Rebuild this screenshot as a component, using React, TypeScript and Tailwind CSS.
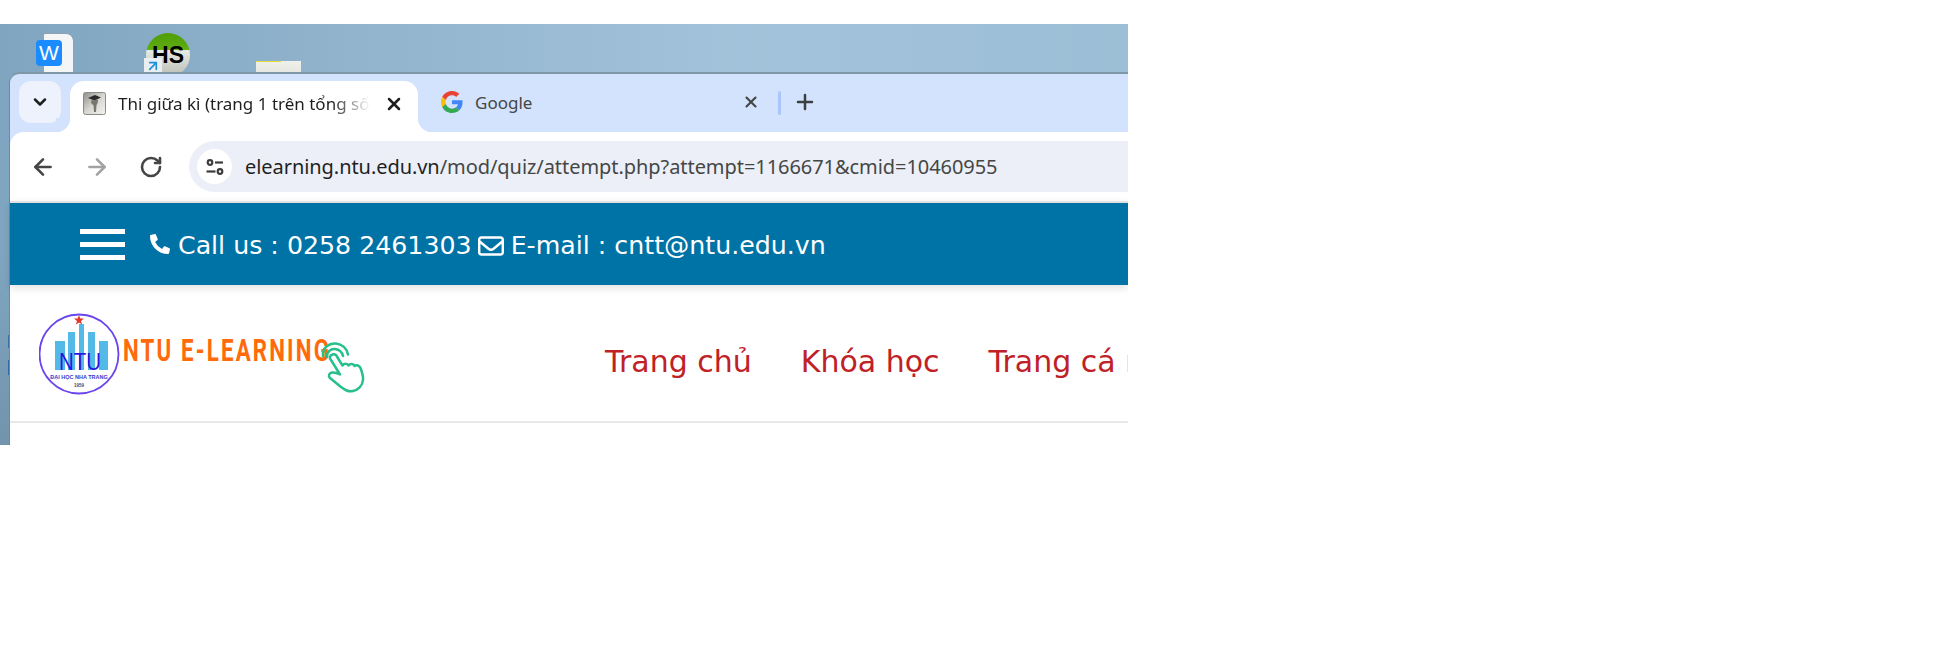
import { ArrowLeft, ArrowRight, ChevronDown, Plus, RotateCw, X } from "lucide-react";
import { FaPhoneAlt } from "react-icons/fa";
import { FaRegEnvelope } from "react-icons/fa6";

const GoogleIcon = () => (
    <svg viewBox="0 0 48 48" className="w-[22px] h-[22px]">
        <path fill="#EA4335" d="M24 9.5c3.54 0 6.71 1.22 9.21 3.6l6.85-6.85C35.9 2.38 30.47 0 24 0 14.62 0 6.51 5.38 2.56 13.22l7.98 6.19C12.43 13.72 17.74 9.5 24 9.5z" />
        <path fill="#4285F4" d="M46.98 24.55c0-1.57-.15-3.09-.38-4.55H24v9.02h12.94c-.58 2.96-2.26 5.48-4.78 7.18l7.73 6c4.51-4.18 7.09-10.36 7.09-17.65z" />
        <path fill="#FBBC05" d="M10.53 28.59c-.48-1.45-.76-2.99-.76-4.59s.27-3.14.76-4.59l-7.98-6.19C.92 16.46 0 20.12 0 24c0 3.88.92 7.54 2.56 10.78l7.97-6.19z" />
        <path fill="#34A853" d="M24 48c6.48 0 11.93-2.13 15.89-5.81l-7.73-6c-2.15 1.45-4.92 2.3-8.16 2.3-6.26 0-11.57-4.22-13.47-9.91l-7.98 6.19C6.51 42.62 14.62 48 24 48z" />
    </svg>
);

const QuizFavicon = () => (
    <svg viewBox="0 0 23 23" className="w-[23px] h-[23px] shrink-0">
        <defs>
            <linearGradient id="fav" x1="0" y1="0" x2="1" y2="1">
                <stop offset="0" stopColor="#8f8d88" />
                <stop offset="0.5" stopColor="#d8d6d1" />
                <stop offset="1" stopColor="#f4f3f0" />
            </linearGradient>
        </defs>
        <rect x="0.5" y="0.5" width="22" height="22" rx="2" fill="url(#fav)" stroke="#8d8b86" />
        <path d="M5 6 12 3l6 2.500L11.500 8.500z" fill="#2b2b2b" />
        <path d="M8 8.500c0 3 1 4 2.500 4.500L11 20h2l.5-7c1-1 1.500-3 1.500-5.500z" fill="#77766f" />
    </svg>
);

const SiteInfoIcon = () => (
    <svg viewBox="0 0 20 20" className="w-[20px] h-[20px]" fill="none" stroke="#3c3c3c" strokeWidth="2.200">
        <circle cx="5" cy="5.500" r="2.300" />
        <path d="M10 5.500h8" />
        <path d="M1.500 14.500h9" />
        <circle cx="15" cy="14.500" r="2.300" />
    </svg>
);

// seal + wordmark + hand, all one picture in the original
const Logo = () => (
    <svg viewBox="0 0 336 96" className="w-[336px] h-[96px]">
        <circle cx="40" cy="46" r="39.500" fill="white" stroke="#6a45ee" strokeWidth="1.800" />
        <path d="M16 33h10v29H16zM29 24h7v38h-7zM40 16h5v46h-5zM49 24h7v38h-7zM60 33h9v29h-9z" fill="#53b9e6" />
        <path d="m40 7 1.300 3.600h3.700l-3 2.300 1.100 3.700-3.100-2.200-3.100 2.200 1.100-3.700-3-2.300h3.700z" fill="#e5352b" />
        <text x="41" y="62" textAnchor="middle" fontFamily="Liberation Sans, sans-serif" fontSize="24" fill="#2a16e0" textLength="42" lengthAdjust="spacingAndGlyphs">NTU</text>
        <text x="40" y="71" textAnchor="middle" fontFamily="Liberation Sans, sans-serif" fontWeight="700" fontSize="5.500" fill="#3d36c9">ĐẠI HỌC NHA TRANG</text>
        <text x="40" y="79" textAnchor="middle" fontFamily="Liberation Sans, sans-serif" fontWeight="700" fontSize="4.500" fill="#4a4a70">1959</text>
        <text x="84" y="53" fontFamily="Roboto, sans-serif" fontWeight="700" fontSize="31" letterSpacing="3" fill="#ff6a0a" textLength="208" lengthAdjust="spacingAndGlyphs">NTU E-LEARNING</text>
        <g fill="none" stroke="#27c08a" strokeWidth="2.500" strokeLinecap="round" strokeLinejoin="round">
            <path d="M292 52c-2-2-1.500-4.500 1.500-5.500 2-.5 4 .5 5 3l5 8c1.500-2.500 5-2.500 6 0 1.500-2 5-2 6 .5 2-1.500 5-.5 6 2 1.500 4 3 8 2.500 12-.5 6-5 10-10 11-5 1-8-1-12-4l-11-9c-2-2-1-5 2-5.500 3-.5 6 1 8 2z" />
            <path d="M288 49c-.5-5 4-8.500 8-8 4 .5 7 3 8 7" />
            <path d="M284 48c-1-8 6-13 13-12.500 6 .5 11 5 12 11" />
        </g>
    </svg>
);

const DesktopIcons = () => (
    <>
        <div className="absolute left-[43px] top-[9px] w-[31px] h-[45px] bg-[#f4f5f6] border border-[#8fa0ae] rounded-tr-[8px] rounded-tl-[2px]" />
        <div className="absolute left-[36px] top-[16px] w-[26px] h-[26px] rounded-[4px] bg-[#1a8cff] flex items-center justify-center text-white text-[21px] font-['Liberation_Sans',sans-serif]">
            W
        </div>
        <div className="absolute left-[146px] top-[9px] w-[44px] h-[44px] rounded-full bg-[linear-gradient(#4f9d08_0%,#5fae12_38%,#e8eae4_39%,#b9bdb4_100%)] flex items-center justify-center text-black text-[23px] font-bold font-['Liberation_Sans',sans-serif]">
            HS
        </div>
        <div className="absolute left-[144px] top-[34px] w-[18px] h-[22px] bg-[#e9eef2] flex justify-center">
            <ArrowRight className="w-[16px] h-[16px] -rotate-45 text-[#1f8fd6]" strokeWidth={2.500} />
        </div>
        <div className="absolute left-[256px] top-[37px] w-[45px] h-[20px] bg-[linear-gradient(#f1f1ea,#e0e0dc)]">
            <div className="w-[25px] h-[1px] bg-[#e4dc3e]" />
        </div>
        <div className="absolute left-[8px] top-[311px] w-[2px] h-[13px] bg-[#3a6f9f]" />
        <div className="absolute left-[8px] top-[336px] w-[2px] h-[15px] bg-[#cfd8d8] border-l border-[#2f6aa5]" />
    </>
);

const App = () => {
    return (
        <div className="w-[1943px] h-[652px] bg-white pt-[24px] overflow-hidden">
            <div className="relative w-[1128px] h-[421px] overflow-hidden pl-[10px] pt-[50px] bg-[linear-gradient(to_bottom,rgba(0,0,0,0)_55%,rgba(60,80,90,0.2)_100%),linear-gradient(to_right,#7fa5c0_0%,#8cafc9_20%,#a2c2da_65%,#9cbfd6_100%)]">
                <DesktopIcons />
                <div className="relative h-[371px] flex flex-col bg-[#d3e3fd] rounded-tl-[9px] shadow-[0_-2px_0_#7f98a8,-1px_0_0_#6f8a9c]">
                    {/* tab strip */}
                    <div className="h-[58px] shrink-0 flex items-start pt-[7px] pl-[9px]">
                        <div className="w-[42px] h-[42px] rounded-[12px] bg-[#edf2fc] flex items-center justify-center">
                            <ChevronDown className="w-[20px] h-[20px] text-[#1f1f1f]" strokeWidth={3} />
                        </div>
                        <div className="relative ml-[9px] w-[348px] h-[51px] bg-white rounded-t-[14px] flex items-center pl-[13px] pb-[6px]">
                            <div className="absolute -left-[14px] bottom-0 w-[14px] h-[14px] bg-[radial-gradient(circle_at_0_0,#d3e3fd_14px,white_14.500px)]" />
                            <div className="absolute -right-[14px] bottom-0 w-[14px] h-[14px] bg-[radial-gradient(circle_at_100%_0,#d3e3fd_14px,white_14.500px)]" />
                            <QuizFavicon />
                            <div className="ml-[12px] w-[252px] overflow-hidden whitespace-nowrap text-[17px] text-[#1f1f1f] font-['Noto_Sans',sans-serif] [mask-image:linear-gradient(to_right,black_85%,transparent)]">
                                Thi giữa kì (trang 1 trên tổng số 1)
                            </div>
                            <X className="ml-[14px] w-[20px] h-[20px] text-[#1f1f1f]" strokeWidth={3} />
                        </div>
                        <div className="ml-[22px] w-[24px] h-[42px] flex items-center justify-center">
                            <GoogleIcon />
                        </div>
                        <div className="ml-[11px] w-[266px] h-[44px] flex items-center text-[17px] text-[#444746] font-['Noto_Sans',sans-serif]">
                            Google
                        </div>
                        <div className="w-[20px] h-[42px] flex items-center justify-center">
                            <X className="w-[18px] h-[18px] text-[#444746]" strokeWidth={2.800} />
                        </div>
                        <div className="ml-[17px] mt-[10px] w-[3px] h-[24px] bg-[#a8c7fa] rounded-full" />
                        <div className="ml-[12px] w-[24px] h-[42px] flex items-center justify-center">
                            <Plus className="w-[26px] h-[26px] text-[#3c3f42]" strokeWidth={2.500} />
                        </div>
                    </div>
                    {/* toolbar */}
                    <div className="h-[69px] shrink-0 bg-white rounded-tl-[14px] flex items-center pl-[20px]">
                        <ArrowLeft className="w-[26px] h-[26px] text-[#444746]" strokeWidth={2.400} />
                        <ArrowRight className="ml-[28px] w-[26px] h-[26px] text-[#a3a3a3]" strokeWidth={2.400} />
                        <RotateCw className="ml-[29px] w-[24px] h-[24px] text-[#444746]" strokeWidth={2.600} />
                        <div className="ml-[26px] flex-1 h-[51px] bg-[#eceff7] rounded-l-[26px] flex items-center pl-[8px]">
                            <div className="w-[35px] h-[35px] rounded-full bg-white flex items-center justify-center">
                                <SiteInfoIcon />
                            </div>
                            <div className="ml-[13px] whitespace-nowrap text-[20px] tracking-[-0.06px] text-[#444746] font-['Noto_Sans',sans-serif]">
                                <span className="text-[#1f1f1f]">elearning.ntu.edu.vn</span>/mod/quiz/attempt.php?attempt=1166671&amp;cmid=10460955
                            </div>
                        </div>
                    </div>
                    {/* site top bar */}
                    <div className="h-[84px] shrink-0 border-t-2 border-[#e2e2e2] bg-[#0073a6] shadow-[0_3px_8px_rgba(0,0,0,0.12)] relative flex items-center pl-[70px] text-white font-['DejaVu_Sans',sans-serif] text-[25.250px] whitespace-nowrap">
                        <div className="flex flex-col gap-[8px] w-[45px]">
                            <div className="h-[5px] bg-white" />
                            <div className="h-[5px] bg-white" />
                            <div className="h-[5px] bg-white" />
                        </div>
                        <FaPhoneAlt className="ml-[25px] w-[20px] h-[20px]" />
                        <span className="ml-[8px] mt-[4px]">Call us : 0258 2461303</span>
                        <FaRegEnvelope className="ml-[6px] mt-[3px] w-[26px] h-[26px]" />
                        <span className="ml-[7px] mt-[4px]">E-mail : cntt@ntu.edu.vn</span>
                    </div>
                    {/* logo + menu */}
                    <div className="h-[138px] shrink-0 bg-white border-b-2 border-[#e8e8e8] flex items-center whitespace-nowrap">
                        <div className="ml-[29px] w-[336px] mt-[6px]">
                            <Logo />
                        </div>
                        <nav className="ml-[230px] flex gap-[49px] text-[30px] text-[#c02126] font-['DejaVu_Sans',sans-serif] mt-[16px]">
                            <span>Trang chủ</span>
                            <span>Khóa học</span>
                            <span>Trang cá nhân</span>
                        </nav>
                    </div>
                    <div className="flex-1 bg-white" />
                </div>
            </div>
        </div>
    );
};

export default App;
